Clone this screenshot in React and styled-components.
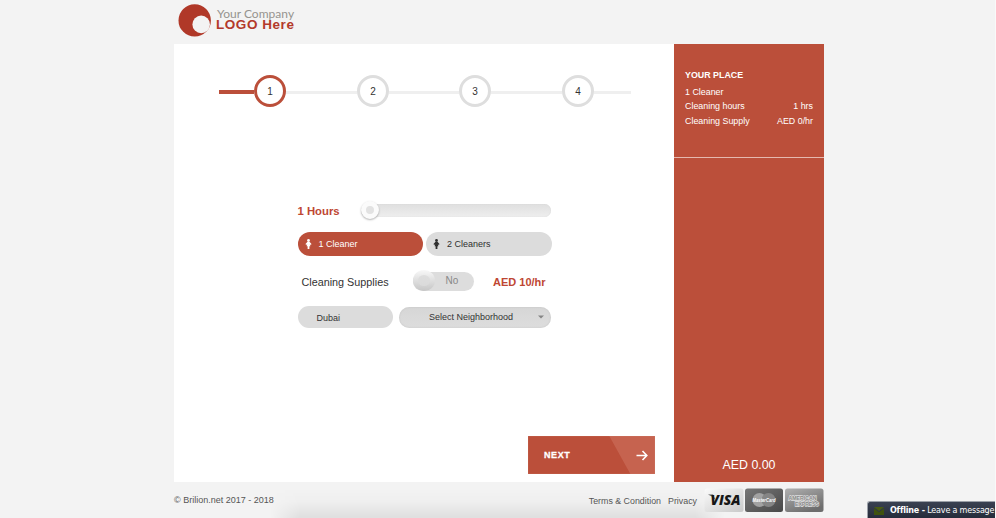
import React from "react";
import styled, { createGlobalStyle } from "styled-components";

const RED = "#bb4f3a";

const Global = createGlobalStyle`
  * { box-sizing: border-box; }
  html, body { margin: 0; height: 518px; overflow: hidden; }
  body {
    background: #f3f3f3;
    color: #333;
    font: 9px/12px "Liberation Sans", Arial, sans-serif;
  }
`;

const Page = styled.div`
  position: relative;
  height: 518px;
  border-right: 1px solid #f9f9f9;
  overflow: hidden;
`;
const Shell = styled.div`
  width: 650px;
  margin-left: 174px;
`;
const Header = styled.header`
  display: flex;
  height: 44px;
  padding: 4px 0 0 4px;
`;
const LogoText = styled.div`
  margin: 5px 0 0 5px;
  white-space: nowrap;
`;
const LogoTop = styled.div`
  font: 12px/10px Lato, sans-serif;
  color: #96938f;
  letter-spacing: 0.02px;
  padding-left: 1px;
`;
const LogoBottom = styled.div`
  font: bold 13.5px/12px "Liberation Sans", sans-serif;
  color: #b3392a;
  letter-spacing: 0.55px;
`;
const Main = styled.main`
  display: flex;
  height: 437.5px;
`;
const Booking = styled.section`
  display: flex;
  flex-direction: column;
  width: 500px;
  background: #fff;
`;
const Steps = styled.div`
  display: flex;
  align-items: center;
  margin: 31px 0 0 45px;
  height: 32px;
`;
const Track = styled.div`
  width: ${(p) => p.$w}px;
  height: ${(p) => (p.$active ? 4 : 3)}px;
  margin-top: 2px;
  background: ${(p) => (p.$active ? RED : "#efefef")};
`;
const Step = styled.div`
  width: 32px;
  height: 32px;
  border-radius: 50%;
  border: 3px solid ${(p) => (p.$active ? RED : "#dedede")};
  display: flex;
  align-items: center;
  justify-content: center;
  padding-top: 2px;
  font-size: 10px;
`;
const Form = styled.div`
  width: 254px;
  margin: 94px 0 0 123.5px;
`;
const Row = styled.div`
  display: flex;
  align-items: center;
  height: ${(p) => p.$h}px;
  margin-bottom: ${(p) => p.$gap}px;
`;
const Strong = styled.div`
  font-size: ${(p) => p.$size}px;
  font-weight: bold;
  color: #be4733;
  width: ${(p) => p.$w}px;
  padding-top: ${(p) => p.$drop || 0}px;
  white-space: nowrap;
`;
const Slider = styled.div`
  display: flex;
  align-items: center;
  width: 190px;
  height: 13px;
  border-radius: 7px;
  background: linear-gradient(#dfdfdf, #eeeeee);
  box-shadow: inset 0 0 1px #ccc;
`;
const Knob = styled.div`
  width: 18px;
  height: 18px;
  flex: none;
  margin: -2px 0 0 0;
  border-radius: 50%;
  border: 5px solid #fbfbfb;
  background: #e2e2e2;
  box-shadow: 0 1px 2px rgba(0, 0, 0, 0.3);
`;
const Choice = styled.button`
  display: flex;
  align-items: center;
  flex: none;
  width: 125.5px;
  height: 24px;
  margin: 0 3px 0 0;
  padding: 0 7px;
  gap: 7px;
  border: 0;
  border-radius: 12px;
  font: 9px/12px "Liberation Sans", sans-serif;
  background: ${(p) => (p.$active ? RED : "#dcdcdc")};
  color: ${(p) => (p.$active ? "#fff" : "#2f2f2f")};
`;
const SupplyLabel = styled.div`
  width: 115px;
  padding: 2px 0 0 4px;
  font-size: 10.8px;
`;
const Toggle = styled.div`
  display: flex;
  align-items: center;
  width: 61px;
  height: 19px;
  border-radius: 10px;
  background: #dddddd;
  color: #888;
  font-size: 10px;
  line-height: 14px;
  margin-right: 19.5px;
`;
const ToggleKnob = styled.div`
  width: 22px;
  height: 21px;
  flex: none;
  margin: -1px 11px 0 0;
  border-radius: 50%;
  border: 5px solid transparent;
  background: linear-gradient(#dedede, #dadada) padding-box,
    linear-gradient(#f8f8f8, #c6c6c6) border-box;
`;
const City = styled.div`
  width: 95px;
  height: 22px;
  padding: 6px 0 0 19px;
  border-radius: 11px;
  background: #dcdcdc;
  margin-right: 6.5px;
`;
const Select = styled.div`
  display: flex;
  align-items: center;
  justify-content: space-between;
  width: 152px;
  height: 21px;
  padding: 0 7px 0 30px;
  border-radius: 11px;
  background: linear-gradient(#d6d6d6, #dddddd);
  box-shadow: inset 0 0 2px #c2c2c2;
`;
const Next = styled.button`
  display: flex;
  align-items: center;
  justify-content: space-between;
  width: 127px;
  height: 38px;
  margin: auto 0 8px 354px;
  padding: 0 7px 0 16px;
  border: 0;
  box-shadow: inset 0 0 1px #dba092;
  background: linear-gradient(61deg, ${RED} 68.8%, #c6634f 69.5%);
  color: #fff;
  font: bold 9px/12px "Liberation Sans", sans-serif;
  letter-spacing: 0.6px;
  -webkit-text-stroke: 0.3px #fff;
`;
const Sidebar = styled.aside`
  display: flex;
  flex-direction: column;
  width: 150px;
  background: ${RED};
  color: #fff;
`;
const Summary = styled.div`
  height: 113.5px;
  padding: 25px 11px 0;
  border-bottom: 1.5px solid #e5b9af;
`;
const SummaryTitle = styled.div`
  font-size: 8.9px;
  font-weight: bold;
  line-height: 13px;
  margin-bottom: 3px;
`;
const SummaryRow = styled.div`
  display: flex;
  justify-content: space-between;
  font-size: 8.9px;
  line-height: 14.4px;
`;
const Total = styled.div`
  margin: auto 0 9px;
  text-align: center;
  font-size: 12.4px;
  line-height: 16px;
`;
const Footer = styled.footer`
  display: flex;
  position: relative;
  z-index: 1;
  height: 36px;
  padding-top: 6.5px;
  color: #555;
  font-size: 8.85px;
`;
const Copyright = styled.div`
  padding-top: 6px;
  font-size: 9px;
  flex: 1;
`;
const Links = styled.div`
  display: flex;
  gap: 7px;
  padding: 7px 7px 0 0;
`;
const Shade = styled.div`
  position: absolute;
  left: 270px;
  bottom: 0;
  width: 455px;
  height: 30px;
  background: linear-gradient(transparent, rgba(0, 0, 0, 0.015) 45%, rgba(0, 0, 0, 0.08));
  mask-image: linear-gradient(90deg, transparent, #000 30px, #000 425px, transparent);
`;
const Chat = styled.div`
  position: absolute;
  z-index: 2;
  right: 0;
  bottom: 0;
  display: flex;
  align-items: center;
  width: 128px;
  height: 17px;
  padding: 1px 0 0 6px;
  border-radius: 3px 0 0 0;
  border: 1px solid #9ba0a8;
  border-width: 1px 0 0 1px;
  background: linear-gradient(#3a4151, #262c3b);
  color: #fff;
  white-space: nowrap;
  font: 8px/12px "DejaVu Sans", sans-serif;
`;
const ChatText = styled.span`
  margin-left: 6px;
  letter-spacing: -0.18px;
`;

const Person = () => (
  <svg width="7" height="10" viewBox="0 0 6 10" fill="currentColor">
    <circle cx="3" cy="1.5" r="1.4" />
    <path d="M2 2.8h2L6 5l-.6.9-1.1-.6.6 2H3.9V10H2.1V7.3h-1l.6-2-1.1.6L0 5Z" />
  </svg>
);

const Cards = () => (
  <svg width="120" height="25" viewBox="0 0 120 25">
    <defs>
      <linearGradient id="visa" x2="1" y2="1">
        <stop stopColor="#fafafa" />
        <stop offset="1" stopColor="#c9c9c9" />
      </linearGradient>
      <linearGradient id="master" x2="1" y2="1">
        <stop stopColor="#777" />
        <stop offset="1" stopColor="#484848" />
      </linearGradient>
      <linearGradient id="amex" x2="0.6" y2="1">
        <stop stopColor="#b0b0b0" />
        <stop offset="1" stopColor="#6d6d6d" />
      </linearGradient>
    </defs>
    <rect x="0.5" y="0.5" width="39" height="23.5" rx="2.5" fill="url(#visa)" />
    <rect x="41" y="0.5" width="38" height="23.5" rx="2.5" fill="url(#master)" />
    <rect x="81" y="0.5" width="38.5" height="23.5" rx="2.5" fill="url(#amex)" />
    <path d="M4 6.6h5l2.5 5.5L7.5 8.3Z" fill="#555" />
    <text x="6.5" y="17" fontFamily="Open Sans" fontSize="14.5" fontWeight="800" fontStyle="italic" fill="#161616" textLength="30" lengthAdjust="spacingAndGlyphs">VISA</text>
    <circle cx="55.5" cy="12" r="7" fill="#a2a2a2" />
    <circle cx="64.5" cy="12" r="7" fill="#858585" />
    <text x="48.5" y="14.2" fontFamily="Liberation Sans" fontSize="5.5" fontWeight="bold" fontStyle="italic" fill="#fff" textLength="23" lengthAdjust="spacingAndGlyphs">MasterCard</text>
    <g fontFamily="Liberation Sans" fontSize="6" fontWeight="bold" fill="#888" stroke="#dedede" strokeWidth="1.3" paintOrder="stroke">
      <text x="84.5" y="12" textLength="28" lengthAdjust="spacingAndGlyphs">AMERICAN</text>
      <text x="91" y="17.8" textLength="24" lengthAdjust="spacingAndGlyphs">EXPRESS</text>
    </g>
  </svg>
);

export default function App() {
  return (
    <Page>
      <Global />
      <Shade />
      <Shell>
        <Header>
          <svg width="33" height="33" viewBox="0 0 33 33">
            <circle cx="16.7" cy="16.4" r="16.2" fill="#b03828" />
            <circle cx="23.2" cy="20.4" r="8.8" fill="#f3f3f3" />
          </svg>
          <LogoText>
            <LogoTop>Your Company</LogoTop>
            <LogoBottom>LOGO Here</LogoBottom>
          </LogoText>
        </Header>
        <Main>
          <Booking>
            <Steps>
              <Track $w={35} $active />
              <Step $active>1</Step>
              <Track $w={71} />
              <Step>2</Step>
              <Track $w={70} />
              <Step>3</Step>
              <Track $w={71} />
              <Step>4</Step>
              <Track $w={37} />
            </Steps>
            <Form>
              <Row $h={19} $gap={12}>
                <Strong $size={11.3} $w={63.5}>1 Hours</Strong>
                <Slider><Knob /></Slider>
              </Row>
              <Row $h={24} $gap={15}>
                <Choice $active><Person />1 Cleaner</Choice>
                <Choice><Person />2 Cleaners</Choice>
              </Row>
              <Row $h={20} $gap={15}>
                <SupplyLabel>Cleaning Supplies</SupplyLabel>
                <Toggle><ToggleKnob />No</Toggle>
                <Strong $size={11} $w={56} $drop={2}>AED 10/hr</Strong>
              </Row>
              <Row $h={22} $gap={0}>
                <City>Dubai</City>
                <Select>
                  Select Neighborhood
                  <svg width="6" height="4" viewBox="0 0 6 4"><path d="M0 .5h6L3 3.5Z" fill="#858585" /></svg>
                </Select>
              </Row>
            </Form>
            <Next>
              NEXT
              <svg width="12" height="12" viewBox="0 0 12 12" fill="none" stroke="#fff" strokeWidth="1.6">
                <path d="M.5 6.5h10M6.5 2l4.3 4.5L6.5 11" />
              </svg>
            </Next>
          </Booking>
          <Sidebar>
            <Summary>
              <SummaryTitle>YOUR PLACE</SummaryTitle>
              <SummaryRow>1 Cleaner</SummaryRow>
              <SummaryRow><span>Cleaning hours</span><span>1 hrs</span></SummaryRow>
              <SummaryRow><span>Cleaning Supply</span><span>AED 0/hr</span></SummaryRow>
            </Summary>
            <Total>AED 0.00</Total>
          </Sidebar>
        </Main>
        <Footer>
          <Copyright>© Brilion.net 2017 - 2018</Copyright>
          <Links><span>Terms &amp; Condition</span><span>Privacy</span></Links>
          <Cards />
        </Footer>
      </Shell>
      <Chat>
        <svg width="10" height="8" viewBox="0 0 10 8">
          <path d="M0 0h10L5 4Z" fill="#4a5c12" />
          <path d="M0 1.3 5 5.2 10 1.3V8H0Z" fill="#3f520e" />
        </svg>
        <ChatText><b>Offline -</b> Leave a message</ChatText>
      </Chat>
    </Page>
  );
}
